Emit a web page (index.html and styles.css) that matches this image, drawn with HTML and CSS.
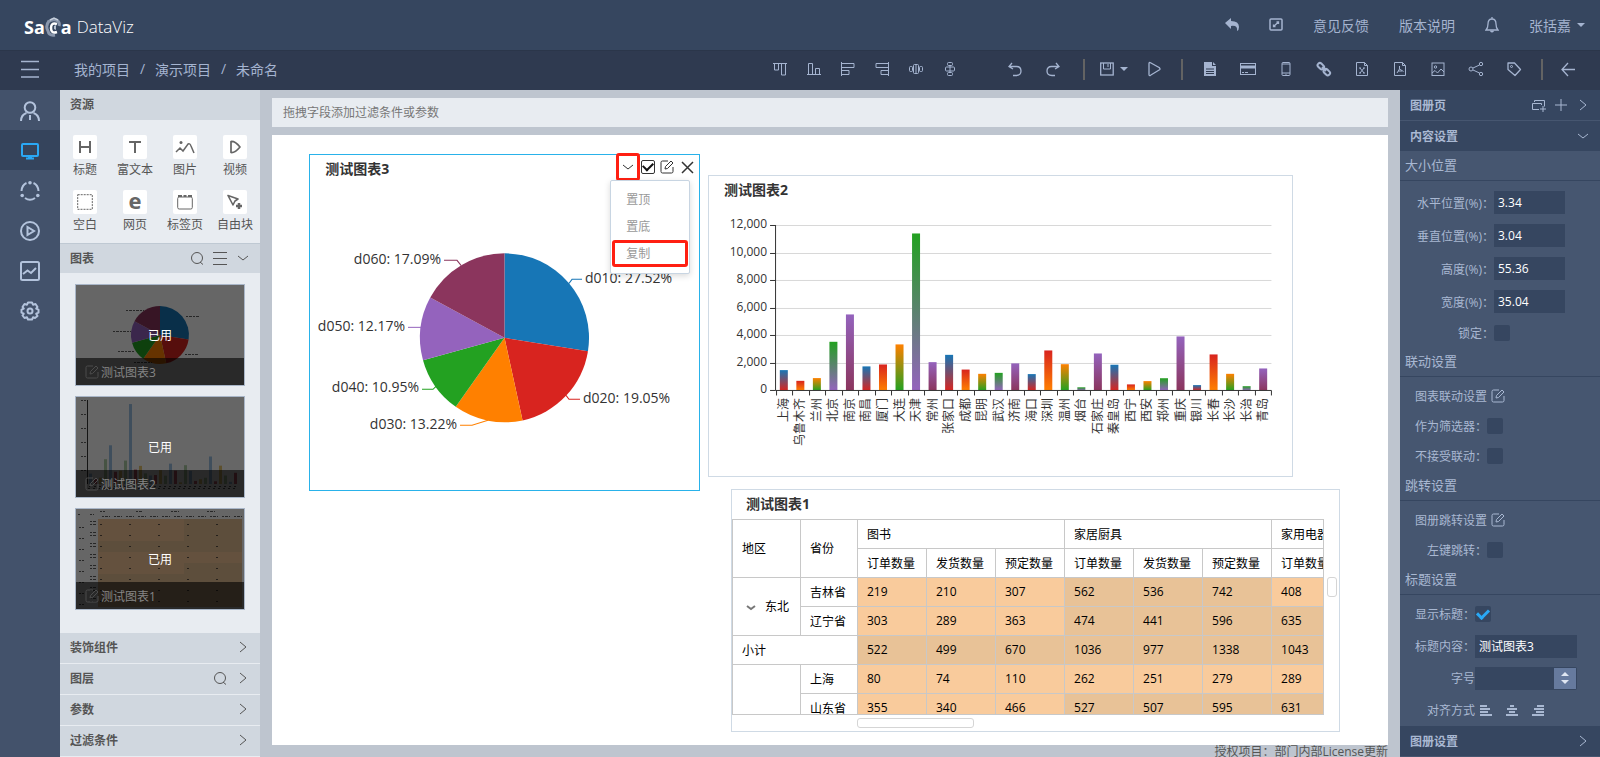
FILE: index.html
```html
<!DOCTYPE html>
<html lang="zh-CN">
<head>
    <meta charset="UTF-8">
    <meta name="viewport" content="width=device-width, initial-scale=1.0">
    <title>SaCa DataViz</title>
    <link rel="stylesheet" href="styles.css">
</head>
<body>

    <!-- shared icons -->
    <svg class="sprite" aria-hidden="true">
        <symbol id="i-right" viewBox="0 0 16 16"><path d="M5 3l6 5-6 5"/></symbol>
        <symbol id="i-down" viewBox="0 0 16 16"><path d="M3 6l5 4 5-4"/></symbol>
        <symbol id="i-search" viewBox="0 0 16 16"><circle cx="8" cy="8" r="5.5"/><path d="M11 12l3 2.500"/></symbol>
        <symbol id="i-edit" viewBox="0 0 16 16"><path d="M9 2H3.500Q2 2 2 3.500v9Q2 14 3.500 14h9q1.500 0 1.500-1.500V8"/><path d="M6 10l.5-2.500L12 2l2 2-5.500 5.500z"/></symbol>
    </svg>

    <header class="header">
        <a class="logo" href="#" aria-label="SaCa DataViz">
            <b>Sa</b>
            <svg width="16" height="20" viewBox="0 0 16 20"><path d="M3 5Q8 1 13 4q2 2 1 5M4 4Q0 9 3 14q1 5 7 4" fill="none" stroke="#8996ac" stroke-width="3"/><path d="M5 3l4-2 4 2" fill="none" stroke="#c5cedb" stroke-width="1.500"/><path d="M12 7Q6 5 6 11t6 4" fill="none" stroke="#fff" stroke-width="2.500"/><path d="M9 9l2-1v5l-2-1z" fill="#b4bfce"/></svg>
            <b>a</b>
            <span>DataViz</span>
        </a>
        <nav class="header-nav">
            <a href="#" aria-label="返回"><svg class="icon" width="14" height="16" viewBox="0 0 14 16"><path d="M0 6l6-5v3q8 0 8 6 0 3-2 4 1-6-6-5v3z" fill="currentColor" stroke="none"/></svg></a>
            <a href="#" aria-label="全屏"><svg class="icon" width="14" height="16" viewBox="0 0 14 16"><rect x="1" y="2" width="12" height="11" rx="1" stroke-width="1.500"/><path d="M4.500 9.500l5-4.500M7.500 5h2v2M4.500 7.500v2h2" stroke-width="1.300"/></svg></a>
            <a href="#">意见反馈</a>
            <a href="#">版本说明</a>
            <a href="#" aria-label="消息"><svg class="icon" width="14" height="16" viewBox="0 0 14 16"><path d="M1 13h12q-2-2-2-6 0-5-4-5T3 7q0 4-2 6zM7 2V0M5.500 14q1.500 1.500 3 0" stroke-width="1.300"/></svg></a>
            <a class="user" href="#">张括嘉<i class="caret"></i></a>
        </nav>
    </header>

    <div class="toolbar">
        <button class="menu-btn" aria-label="菜单"><svg class="icon" width="18" height="18" viewBox="0 0 18 18"><path d="M0 1.500h18M0 9.500h18M0 17h18" stroke-width="1.500"/></svg></button>
        <nav class="crumbs"><a href="#">我的项目</a><i>/</i><a href="#">演示项目</a><i>/</i><a href="#">未命名</a></nav>
        <div class="tools tools-align">
            <button aria-label="顶端对齐"><svg class="icon"><path d="M1 2.500h14M2.500 3v6h4V3M9.500 3v11h4V3"/></svg></button>
            <button aria-label="底端对齐"><svg class="icon"><path d="M1 13.500h14M2.500 13V2.500h4V13M9.500 13V7.500h4V13"/></svg></button>
            <button aria-label="左对齐"><svg class="icon"><path d="M1.500 1v14M2 2.500h12v4H2M2 9.500h7v4H2"/></svg></button>
            <button aria-label="右对齐"><svg class="icon"><path d="M14.500 1v14M14 2.500H2v4h12M14 9.500H7v4h7"/></svg></button>
            <button aria-label="水平分布"><svg class="icon"><rect x="5.500" y="3.500" width="5" height="9" rx="1"/><rect x="1.500" y="5.500" width="3" height="5" rx="1"/><rect x="11.500" y="5.500" width="3" height="5" rx="1"/><path d="M8 3v10"/></svg></button>
            <button aria-label="垂直分布"><svg class="icon"><rect x="3.500" y="6" width="9" height="4" rx="1"/><rect x="5.500" y="1.500" width="5" height="3" rx="1"/><rect x="5.500" y="11.500" width="5" height="3" rx="1"/><path d="M8 4v8"/></svg></button>
        </div>
        <div class="tools tools-history">
            <button aria-label="撤销"><svg class="icon"><path d="M5 2L2 5.500 6 8M2 5.500h7.500q4.500 0 4.500 4.500t-5 4.500H6" stroke-width="1.300"/></svg></button>
            <button aria-label="重做"><svg class="icon"><path d="M11 2l3 3.500L10 8M14 5.500H6.500Q2 5.500 2 10t5 4.500h3" stroke-width="1.300"/></svg></button>
        </div>
        <div class="tools">
            <i class="sep"></i>
            <button class="save" aria-label="保存"><svg class="icon" width="14" height="14" viewBox="0 0 14 14"><rect x=".7" y="1" width="12.500" height="12" stroke-width="1.300"/><path d="M3.500 1v6h7V1M8 2v3"/></svg><i class="caret"></i></button>
            <button aria-label="预览"><svg class="icon"><path d="M3 2.500q0-1.500 1.500-.7l9 5q1 1.200 0 2l-9 5.500Q3 15 3 13.500z" stroke-width="1.300"/></svg></button>
            <i class="sep"></i>
            <button aria-label="文档"><svg class="icon"><path d="M2 1h8v4h4v10H2zM11 1l3 3h-3z" fill="currentColor" stroke="none"/><path d="M4 8h8M4 10.500h8M4 12.500h8" stroke="#2f3a50"/></svg></button>
            <button aria-label="卡片"><svg class="icon"><rect x=".5" y="2.500" width="15" height="11"/><path d="M1 6h14" stroke-width="3"/><path d="M2 11.500h2M5 11.500h3"/></svg></button>
            <button aria-label="手机"><svg class="icon"><rect x="4" y="1.500" width="8" height="13" rx="1"/><path d="M4 3h8M4 12h8M7.500 13.300h1"/></svg></button>
            <button aria-label="链接"><svg class="icon"><g stroke-width="2"><rect x="1.500" y="3" width="7" height="4.500" rx="2" transform="rotate(45 5 5)"/><rect x="7.500" y="9" width="7" height="4.500" rx="2" transform="rotate(45 11 11)"/><path d="M6 6l4 4"/></g></svg></button>
            <button aria-label="导出Excel"><svg class="icon"><path d="M2.500 1.500h8l3 3v10h-11zM10.500 1.500v3h3M6 7l4 5M10 7l-4 5M5 7h2M9 7h2M5 12h2M9 12h2"/></svg></button>
            <button aria-label="导出PDF"><svg class="icon"><path d="M2.500 1.500h8l3 3v10h-11zM10.500 1.500v3h3M7.500 5v3L5 12M7.500 8l4 2.500M6 10h4"/></svg></button>
            <button aria-label="导出图片"><svg class="icon"><rect x="2" y="2" width="12" height="12.500"/><circle cx="5.500" cy="6" r="1.200"/><path d="M2 12l3-2.500L7.500 12 11 8l3 3"/></svg></button>
            <button aria-label="分享"><svg class="icon"><circle cx="3" cy="8" r="2"/><circle cx="13" cy="3" r="1.700"/><circle cx="13" cy="13" r="1.700"/><path d="M5 7l6.500-3M5 9l6.500 3"/></svg></button>
            <button aria-label="标签"><svg class="icon"><path d="M2 2h6.500l6 6.500-5.500 6L2 8.500z" stroke-linejoin="round" stroke-width="1.300"/><circle cx="5.500" cy="5.500" r="1"/></svg></button>
            <i class="sep"></i>
            <button class="back" aria-label="退出"><svg class="icon"><path d="M8 2L2 8.500 8 15M2 8.500h13" stroke-width="1.300"/></svg></button>
        </div>
    </div>

    <main class="main">
        <nav class="rail">
            <a href="#" aria-label="用户"><svg class="icon" width="20" height="20" viewBox="0 0 20 20"><circle cx="10" cy="6.500" r="5.300"/><path d="M1 20q0-6 5.500-8M19 20q0-6-5.500-8M10 14v5"/></svg></a>
            <a class="active" href="#" aria-label="图册"><svg class="icon" width="20" height="20" viewBox="0 0 20 20"><rect x="2" y="3" width="16" height="12" rx="1"/><path d="M6 17.500h8M8 16.500h4"/></svg></a>
            <a href="#" aria-label="数据"><svg class="icon" width="20" height="20" viewBox="0 0 20 20"><path d="M6.500 2Q2 4 1.500 10M13.500 2q4.500 2 5 8M5 17q5 3.500 10 0"/><g fill="currentColor" stroke="none"><circle cx="10" cy="1.800" r="1.800"/><circle cx="2.200" cy="14.500" r="1.800"/><circle cx="17.800" cy="14.500" r="1.800"/></g></svg></a>
            <a href="#" aria-label="播放"><svg class="icon" width="20" height="20" viewBox="0 0 20 20"><circle cx="10" cy="10" r="9"/><path d="M7.500 6v8l6.500-4z"/></svg></a>
            <a href="#" aria-label="分析"><svg class="icon" width="20" height="20" viewBox="0 0 20 20"><rect x="1" y="1" width="18" height="18" rx="1.500"/><path d="M3 13l4.500-3.500L11 12l5-5"/></svg></a>
            <a href="#" aria-label="设置"><svg class="icon" width="20" height="20" viewBox="0 0 20 20"><path d="M8 1.500h4l1 2.200 2.500-.7 2 3-1.300 1.700 2.300 1v3l-2.300 1L17.500 15l-2.500 2-2-.7-1 2.200H8l-1-2.200-2.500.7-2-2.500 1.300-1.800-2.300-1v-3l2.300-1L2.500 6l2-3 2.500.7z" stroke-linejoin="round"/><circle cx="10" cy="10" r="2.500"/></svg></a>
        </nav>

        <aside class="sidebar">
            <div class="side-head">资源</div>
            <div class="resources">
                <button><span><svg class="icon" viewBox="0 0 16 16"><path d="M3 2v12M13 2v12M3 8h10" stroke-width="2"/></svg></span>标题</button>
                <button><span><svg class="icon" viewBox="0 0 16 16"><path d="M2 3h12M8 3v11" stroke-width="2"/></svg></span>富文本</button>
                <button><span><svg class="icon icon-wide" viewBox="0 0 20 16"><path d="M1 13l4-4 3 3 5-7q2-1 3 2l3 7" stroke-width="1.500"/><circle cx="6" cy="3.500" r="1.500" fill="currentColor" stroke="none"/></svg></span>图片</button>
                <button><span><svg class="icon" viewBox="0 0 16 16"><path d="M4 2.500q4-.5 9 5.500-5 6-9 5.500z" stroke-width="1.700" stroke-linejoin="round"/></svg></span>视频</button>
                <button><span><svg class="icon" viewBox="0 0 16 16"><rect x=".7" y=".7" width="14.600" height="14.600" stroke-dasharray="2 1"/></svg></span>空白</button>
                <button><span><b>e</b></span>网页</button>
                <button><span><svg class="icon" viewBox="0 0 16 16"><rect x=".7" y="3" width="14.600" height="12" rx="1.500"/><path d="M1 2h4M6.500 2h3M11 2h4" stroke-width="2"/></svg></span>标签页</button>
                <button><span><svg class="icon" viewBox="0 0 16 16"><path d="M1 1.500l10 3.500-3 2-2 4z" stroke-width="1.600" stroke-linejoin="round"/><path d="M12 9v6M9 12h6" stroke-width="2.500"/></svg></span>自由块</button>
            </div>
            <div class="side-head side-head-line">图表
                <button aria-label="搜索"><svg class="icon"><use href="#i-search"/></svg></button>
                <button aria-label="列表"><svg class="icon"><path d="M1 2.500h14M1 8.500h14M1 14.500h14"/></svg></button>
                <button class="last" aria-label="收起"><svg class="icon"><use href="#i-down"/></svg></button>
            </div>
            <div class="thumbs">
                <div class="thumb">
                    <svg id="thumb-pie" viewBox="0 0 168 100"></svg>
                    <div class="thumb-mask">已用</div>
                    <div class="thumb-name"><svg class="icon"><use href="#i-edit"/></svg>测试图表3</div>
                </div>
                <div class="thumb">
                    <svg id="thumb-bar" viewBox="0 0 168 100"></svg>
                    <div class="thumb-mask">已用</div>
                    <div class="thumb-name"><svg class="icon"><use href="#i-edit"/></svg>测试图表2</div>
                </div>
                <div class="thumb">
                    <svg id="thumb-table" viewBox="0 0 168 100"></svg>
                    <div class="thumb-mask">已用</div>
                    <div class="thumb-name"><svg class="icon"><use href="#i-edit"/></svg>测试图表1</div>
                </div>
            </div>
            <div class="side-row">装饰组件<button class="last" aria-label="展开"><svg class="icon"><use href="#i-right"/></svg></button></div>
            <div class="side-row">图层<button aria-label="搜索"><svg class="icon"><use href="#i-search"/></svg></button><button class="last" aria-label="展开"><svg class="icon"><use href="#i-right"/></svg></button></div>
            <div class="side-row">参数<button class="last" aria-label="展开"><svg class="icon"><use href="#i-right"/></svg></button></div>
            <div class="side-row">过滤条件<button class="last" aria-label="展开"><svg class="icon"><use href="#i-right"/></svg></button></div>
        </aside>

        <section class="workspace">
            <div class="filter-bar">拖拽字段添加过滤条件或参数</div>
            <div class="canvas">
                <div class="widget widget-pie">
                    <div class="widget-head">
                        <h2>测试图表3</h2>
                        <div class="widget-tools">
                            <button class="more marked" aria-label="更多"><svg class="icon"><use href="#i-down"/></svg></button>
                            <input class="check check-dark" type="checkbox" aria-label="选中" checked>
                            <button aria-label="编辑"><svg class="icon"><use href="#i-edit"/></svg></button>
                            <button aria-label="关闭"><svg class="icon"><path d="M3 3l11 11M14 3L3 14" stroke-width="1.500"/></svg></button>
                        </div>
                    </div>
                    <svg class="plot" id="pie" viewBox="0 0 389 305"></svg>
                    <div class="menu">
                        <button>置顶</button>
                        <button>置底</button>
                        <button class="marked">复制</button>
                    </div>
                </div>

                <div class="widget widget-bar">
                    <div class="widget-head"><h2>测试图表2</h2></div>
                    <svg class="plot" id="bar" viewBox="0 0 583 270"></svg>
                </div>

                <div class="widget widget-table">
                    <div class="widget-head"><h2>测试图表1</h2></div>
                    <div class="table-area">
                        <div class="table-view">
                            <table>
                                <colgroup><col class="c-area"><col class="c-prov"><col span="7" class="c-num"></colgroup>
                                <thead>
                                    <tr><th rowspan="2">地区</th><th rowspan="2">省份</th><th colspan="3">图书</th><th colspan="3">家居厨具</th><th>家用电器</th></tr>
                                    <tr><th>订单数量</th><th>发货数量</th><th>预定数量</th><th>订单数量</th><th>发货数量</th><th>预定数量</th><th>订单数量</th></tr>
                                </thead>
                                <tbody>
                                    <tr><th rowspan="2" class="group"><svg class="icon"><path d="M1 4l4 3 4-3" stroke-width="2"/></svg>东北</th><th>吉林省</th><td>219</td><td>210</td><td>307</td><td class="d">562</td><td class="d">536</td><td class="d">742</td><td>408</td></tr>
                                    <tr><th>辽宁省</th><td>303</td><td>289</td><td>363</td><td class="d">474</td><td class="d">441</td><td class="d">596</td><td class="d">635</td></tr>
                                    <tr class="total"><th colspan="2">小计</th><td>522</td><td>499</td><td>670</td><td>1036</td><td>977</td><td>1338</td><td>1043</td></tr>
                                    <tr><th rowspan="2"></th><th>上海</th><td>80</td><td>74</td><td>110</td><td>262</td><td>251</td><td>279</td><td>289</td></tr>
                                    <tr><th>山东省</th><td>355</td><td>340</td><td>466</td><td class="d">527</td><td class="d">507</td><td class="d">595</td><td class="d">631</td></tr>
                                </tbody>
                            </table>
                        </div>
                        <div class="bar-v"></div>
                        <div class="bar-h"></div>
                    </div>
                </div>
            </div>
            <footer class="license">授权项目：部门内部License更新</footer>
        </section>

        <aside class="settings">
            <div class="set-head">图册页
                <button aria-label="复制页"><svg class="icon"><path d="M3.500 5V3.500h10v6M8 12.500H1.500v-6h9V8M12 9v6M9 12h6"/></svg></button>
                <button aria-label="新增页"><svg class="icon"><path d="M8 2v12M2 8h12"/></svg></button>
                <button class="last" aria-label="展开"><svg class="icon"><use href="#i-right"/></svg></button>
            </div>
            <div class="set-head set-open">内容设置<button class="last" aria-label="收起"><svg class="icon"><use href="#i-down"/></svg></button></div>
            <form class="set-body">
                <h3>大小位置</h3>
                <div class="group-size">
                    <div class="field"><label for="x">水平位置(%)：</label><input id="x" type="text" value="3.34"></div>
                    <div class="field"><label for="y">垂直位置(%)：</label><input id="y" type="text" value="3.04"></div>
                    <div class="field"><label for="h">高度(%)：</label><input id="h" type="text" value="55.36"></div>
                    <div class="field"><label for="w">宽度(%)：</label><input id="w" type="text" value="35.04"></div>
                    <div class="field field-short"><label for="lock">锁定：</label><input class="check" id="lock" type="checkbox"></div>
                </div>
                <h3>联动设置</h3>
                <div class="group-link">
                    <div class="field"><label for="link">图表联动设置</label><button id="link" type="button" aria-label="编辑"><svg class="icon"><use href="#i-edit"/></svg></button></div>
                    <div class="field"><label for="as-filter">作为筛选器：</label><input class="check" id="as-filter" type="checkbox"></div>
                    <div class="field"><label for="no-link">不接受联动：</label><input class="check" id="no-link" type="checkbox"></div>
                </div>
                <h3>跳转设置</h3>
                <div class="group-link">
                    <div class="field"><label for="jump">图册跳转设置</label><button id="jump" type="button" aria-label="编辑"><svg class="icon"><use href="#i-edit"/></svg></button></div>
                    <div class="field"><label for="left-jump">左键跳转：</label><input class="check" id="left-jump" type="checkbox"></div>
                </div>
                <h3>标题设置</h3>
                <div class="group-title">
                    <div class="field"><label for="show">显示标题：</label><input class="check" id="show" type="checkbox" checked></div>
                    <div class="field"><label for="name">标题内容：</label><input id="name" type="text" value="测试图表3"></div>
                    <div class="field"><label for="size">字号</label><div class="spinner"><input id="size" type="text"><button type="button" aria-label="调整字号"><i class="caret up"></i><i class="caret"></i></button></div></div>
                    <div class="field aligns"><span>对齐方式</span>
                        <button type="button" aria-label="居左"><svg class="icon" viewBox="0 0 12 12"><path d="M0 2h7M0 5h10M0 8h8M0 11h12" stroke-width="2"/></svg></button>
                        <button type="button" aria-label="居中"><svg class="icon" viewBox="0 0 12 12"><path d="M4 2h4M1 5h10M3 8h6M0 11h12" stroke-width="2"/></svg></button>
                        <button type="button" aria-label="居右"><svg class="icon" viewBox="0 0 12 12"><path d="M5 2h7M2 5h10M4 8h8M0 11h12" stroke-width="2"/></svg></button>
                    </div>
                </div>
            </form>
            <div class="set-head">图册设置<button class="last" aria-label="展开"><svg class="icon"><use href="#i-right"/></svg></button></div>
        </aside>
    </main>

    <script>
        const colors = ['#1776b6', '#d8241f', '#ff8000', '#23a121', '#9463bd', '#8b355d'];

        // label: x, y, anchor; line: guide points
        const pieData = [
            { name: 'd010', value: 27.52, x: 275, y: 98, line: '259,98 262,94 272,94' },
            { name: 'd020', value: 19.05, x: 273, y: 218, line: '256,210 259,214 270,214' },
            { name: 'd030', value: 13.22, x: 147, y: 244, end: true, line: '178,235 162,240 150,240' },
            { name: 'd040', value: 10.95, x: 109, y: 207, end: true, line: '126,201 123,204 112,204' },
            { name: 'd050', value: 12.17, x: 95, y: 146, end: true, line: '111,142 98,142' },
            { name: 'd060', value: 17.09, x: 131, y: 79, end: true, line: '151,80 147,75 134,75' }
        ];

        const barData = [
            ['上海', 1480], ['乌鲁木齐', 700], ['兰州', 900], ['北京', 3540], ['南京', 5530], ['南昌', 1750],
            ['厦门', 1890], ['大连', 3350], ['天津', 11420], ['常州', 2060], ['张家口', 2590], ['成都', 1520],
            ['昆明', 1210], ['武汉', 1280], ['济南', 1970], ['海口', 1190], ['深圳', 2910], ['温州', 1910],
            ['烟台', 230], ['石家庄', 2690], ['秦皇岛', 1870], ['西宁', 440], ['西安', 680], ['郑州', 890],
            ['重庆', 3930], ['银川', 390], ['长春', 2620], ['长沙', 1210], ['长治', 310], ['青岛', 1600]
        ];

        function slices(cx, cy, r) {
            let angle = 0;
            return pieData.map((d, i) => {
                const next = angle + d.value / 100 * Math.PI * 2;
                const x1 = cx + r * Math.sin(angle), y1 = cy - r * Math.cos(angle);
                const x2 = cx + r * Math.sin(next), y2 = cy - r * Math.cos(next);
                angle = next;
                return `<path d="M${cx} ${cy}L${x1} ${y1}A${r} ${r} 0 0 1 ${x2} ${y2}Z" fill="${colors[i]}"/>`;
            }).join('');
        }

        function drawPie() {
            const labels = pieData.map((d, i) =>
                `<polyline points="${d.line}" fill="none" stroke="${colors[i]}"/>` +
                `<text x="${d.x}" y="${d.y}" class="pie-label${d.end ? ' end' : ''}">${d.name}: ${d.value.toFixed(2)}%</text>`
            ).join('');
            document.getElementById('pie').innerHTML = slices(194.5, 152.5, 84.5) + labels;
        }

        function drawBar() {
            const left = 66.5, right = 562.5, bottom = 184.5, height = 165;
            const step = (right - left) / barData.length;
            let html = '<defs>';
            for (let i = 0; i < 5; i++) {
                html += `<linearGradient id="g${i}" x1="0" y1="0" x2="0" y2="1"><stop offset="0" stop-color="${colors[i]}"/><stop offset="1" stop-color="${colors[i + 1]}"/></linearGradient>`;
            }
            html += '</defs>';
            for (let v = 0; v <= 12000; v += 2000) {
                const y = Math.floor(bottom - v / 12000 * height) + 0.5;
                if (v) html += `<path d="M${left} ${y}H${right}" stroke="#d8d8d8"/>`;
                html += `<path d="M61 ${y}H${left}" stroke="#333"/><text x="58" y="${y + 3}" class="axis-label end">${v.toLocaleString('en-US')}</text>`;
            }
            barData.forEach((d, i) => {
                const x = left + step * i, mid = x + step / 2, h = d[1] / 12000 * height;
                html += `<rect x="${mid - 4}" y="${bottom - h}" width="8" height="${h}" fill="url(#g${i % 5})"/>`;
                html += `<path d="M${Math.round(x) + 0.5} ${bottom}v5" stroke="#333"/>`;
                html += `<text transform="translate(${mid + 4} 192) rotate(-90)" class="axis-label end">${d[0]}</text>`;
            });
            html += `<path d="M${left} 19V${bottom}H${right}v5" fill="none" stroke="#333"/>`;
            document.getElementById('bar').innerHTML = html;
        }

        function drawThumbs() {
            const dash = (x, y, w) => `<path d="M${x} ${y + 0.5}h${w}" stroke="#222" stroke-dasharray="2 1 3 1" opacity=".7"/>`;
            document.getElementById('thumb-pie').innerHTML = slices(84, 50, 29) +
                dash(50, 25, 18) + dash(37, 46, 18) + dash(42, 66, 16) + dash(58, 77, 18) + dash(110, 31, 14) + dash(109, 69, 14);

            const soft = ['#9ec3e6', '#d06070', '#e8c870', '#b0d0a8'];
            let bars = '<path d="M11.500 3v84" stroke="#333"/>';
            barData.forEach((d, i) => {
                const h = d[1] / 12000 * 84;
                bars += `<rect x="${13 + i * 5}" y="${87 - h}" width="3" height="${h}" fill="${soft[i % 4]}"/>` + dash(13 + i * 5, 89, 3) + dash(12 + i * 5, 91, 2);
            });
            for (let y = 3; y < 87; y += 14) bars += dash(5, y, 5);
            document.getElementById('thumb-bar').innerHTML = bars;

            let table = '<rect x="22" y="10" width="144" height="88" fill="#e8c297"/>' +
                '<path d="M22 10h86v22H22zM22 43h144v11H22zM22 54h86v11H22z" fill="#f9cb9c"/>';
            for (let x = 26; x < 160; x += 12) table += dash(x, 7, 8);
            table += dash(24, 2, 5) + dash(60, 2, 7) + dash(95, 2, 8) + dash(131, 2, 8) + dash(2, 5, 3) + dash(14, 5, 4);
            for (let y = 15; y < 96; y += 11) {
                table += dash(14, y, 6) + dash(14, y - 3, 6) + dash(3, y + 3, 5);
                for (let x = 24; x < 150; x += 29) table += dash(x, y, 3);
            }
            document.getElementById('thumb-table').innerHTML = table;
        }

        drawPie();
        drawBar();
        drawThumbs();
    </script>
</body>
</html>
```
FILE: styles.css
```css
* {
    box-sizing: border-box;
}

body {
    margin: 0;
    height: 100vh;
    display: flex;
    flex-direction: column;
    overflow: hidden;
    font-family: "Open Sans", "Noto Sans CJK SC", sans-serif;
    font-size: 12px;
    color: #333;
}

a {
    color: inherit;
    text-decoration: none;
}

button {
    padding: 0;
    border: none;
    background: none;
    color: inherit;
    font: inherit;
    cursor: pointer;
    display: flex;
    align-items: center;
    justify-content: center;
}

input {
    margin: 0;
    border: none;
    font: inherit;
}

i {
    font-style: normal;
}

.sprite {
    display: none;
}

.icon {
    display: block;
    flex: none;
    fill: none;
    stroke: currentColor;
}

.icon:not([width]) {
    width: 16px;
    height: 16px;
}

.caret {
    border: 4px solid transparent;
    border-top-color: currentColor;
    border-bottom: none;
}

.caret.up {
    border-top: none;
    border-bottom: 4px solid currentColor;
}

/* header */
.header {
    height: 50px;
    flex: none;
    display: flex;
    align-items: center;
    justify-content: space-between;
    padding: 0 15px 0 24px;
    background-color: #36465f;
    color: #a5b4d0;
    font-size: 14px;
}

.logo {
    display: flex;
    align-items: center;
    padding-top: 3px;
    color: #fff;
    font-size: 18px;
}

.logo span {
    margin-left: 5px;
    font-size: 17px;
    font-weight: 300;
}

.header-nav {
    display: flex;
    align-items: center;
    gap: 30px;
}

.user {
    display: flex;
    align-items: center;
    gap: 6px;
}

/* toolbar */
.toolbar {
    height: 40px;
    flex: none;
    display: flex;
    align-items: center;
    padding: 0 15px 3px 0;
    border-top: 1px solid #2b364a;
    background-color: #2f3a50;
    color: #a5b4d0;
    font-size: 14px;
}

.menu-btn {
    width: 60px;
    height: 36px;
}

.crumbs {
    display: flex;
    margin-left: 14px;
    margin-right: auto;
}

.crumbs i {
    width: 25px;
    text-align: center;
}

.tools {
    display: flex;
    align-items: center;
}

.tools button {
    width: 38px;
    height: 30px;
}

.tools-align {
    margin-right: 29px;
}

.tools-align button,
.tools .back {
    width: 34px;
}

.tools-history {
    margin-right: 3px;
}

.tools .save {
    width: 42px;
    gap: 6px;
}

.sep {
    width: 2px;
    height: 21px;
    margin: 0 8px;
    background-color: #636363;
}

/* left side */
.main {
    flex: 1;
    min-height: 0;
    display: flex;
}

.rail {
    width: 60px;
    flex: none;
    background-color: #43526b;
    color: #b3c3dc;
}

.rail a {
    height: 40px;
    display: flex;
    align-items: center;
    justify-content: center;
    padding-top: 1px;
}

.rail .icon {
    stroke-width: 2;
}

.rail .active {
    background-color: #35445c;
    color: #2aa8f5;
}

.sidebar {
    width: 200px;
    flex: none;
    display: flex;
    flex-direction: column;
    background-color: #e8ecf1;
    color: #555;
}

.side-head,
.side-row {
    height: 30px;
    flex: none;
    display: flex;
    align-items: center;
    padding: 0 9px 2px 10px;
    gap: 7px;
    background-color: #d0d7df;
    font-weight: bold;
}

.side-head button:first-of-type,
.side-row button:first-of-type {
    margin-left: auto;
}

.side-head-line {
    border-top: 1px solid #bfc9d3;
}

.side-row {
    height: 31px;
    border-bottom: 1px solid #e8ecf1;
}

.resources {
    flex: none;
    display: grid;
    grid-template-columns: repeat(4, 1fr);
    row-gap: 9px;
    padding: 15px 0 7px;
}

.resources button {
    flex-direction: column;
    line-height: 22px;
    white-space: nowrap;
}

.resources span {
    width: 24px;
    height: 24px;
    display: flex;
    align-items: center;
    justify-content: center;
    border-radius: 2px;
    background-color: #fff;
    color: #666;
}

.resources .icon-wide {
    width: 20px;
}

.resources b {
    padding-bottom: 4px;
    font-size: 22px;
    line-height: 20px;
}

.thumbs {
    flex: 1;
    min-height: 0;
    overflow: hidden;
    display: flex;
    flex-direction: column;
    gap: 10px;
    padding: 11px 15px;
}

.thumb {
    position: relative;
    height: 102px;
    flex: none;
    border: 1px solid #a9b6c8;
    background-color: #fff;
}

.thumb > svg {
    display: block;
    width: 100%;
    height: 100%;
}

.thumb-mask {
    position: absolute;
    inset: 0;
    display: flex;
    align-items: center;
    justify-content: center;
    background-color: rgba(0, 0, 0, 0.6);
    color: #fff;
}

.thumb-name {
    position: absolute;
    left: 0;
    right: 0;
    bottom: 0;
    height: 27px;
    display: flex;
    align-items: center;
    padding-left: 8px;
    background-color: rgba(0, 0, 0, 0.6);
    color: #858585;
}

.thumb-name .icon {
    color: #4c4c4c;
    margin-right: 1px;
}

/* canvas */
.workspace {
    flex: 1;
    min-width: 0;
    display: flex;
    flex-direction: column;
    padding: 8px 12px 0;
    background-color: #bec5cf;
}

.filter-bar {
    height: 29px;
    flex: none;
    margin-bottom: 8px;
    padding-left: 11px;
    line-height: 29px;
    background-color: #e8ecf1;
    color: #777;
}

.canvas {
    position: relative;
    flex: 1;
    background-color: #fff;
}

.license {
    height: 12px;
    flex: none;
    line-height: 14px;
    text-align: right;
    white-space: nowrap;
    color: #555;
}

.widget {
    position: absolute;
    display: flex;
    flex-direction: column;
    border: 1px solid #cfdae5;
    background-color: #fff;
}

.widget-pie {
    left: 3.34%;
    top: 3.04%;
    width: 35.04%;
    height: 55.36%;
    border-color: #29b2ea;
}

.widget-bar {
    left: 39.07%;
    top: 6.56%;
    width: 52.42%;
    height: 49.5%;
}

.widget-table {
    left: 41.13%;
    top: 58.03%;
    width: 54.57%;
    height: 39.84%;
}

.widget-head {
    height: 30px;
    flex: none;
    display: flex;
    justify-content: space-between;
    padding: 0 4px 0 15px;
}

.widget-table .widget-head {
    height: 29px;
    padding-left: 14px;
}

.widget-head h2 {
    margin: 0;
    font-size: 14px;
    line-height: 28px;
}

.widget-tools {
    display: flex;
    align-items: center;
    height: 24px;
    gap: 4px;
}

.widget-tools .more {
    width: 24px;
    height: 28px;
    margin-right: -3px;
}

.marked {
    outline: 3px solid #ff1f12;
    outline-offset: -3px;
    border-radius: 3px;
}

.plot {
    flex: 1;
    min-height: 0;
    width: 100%;
}

.pie-label {
    font-size: 14px;
    fill: #333;
}

.axis-label {
    font-size: 12px;
    fill: #333;
}

.end {
    text-anchor: end;
}

.menu {
    position: absolute;
    top: 25px;
    right: 9px;
    width: 80px;
    padding: 5px 1px 6px;
    border: 1px solid #c8d5e2;
    border-radius: 2px;
    background-color: #fff;
    box-shadow: 0 2px 6px rgba(0, 0, 0, 0.15);
}

.menu button {
    width: 100%;
    height: 27px;
    justify-content: flex-start;
    padding-left: 14px;
    color: #999;
}

/* table */
.table-area {
    flex: 1;
    min-height: 0;
    display: grid;
    grid-template-columns: minmax(0, 1fr) 10px;
    grid-template-rows: minmax(0, 1fr) 10px;
    gap: 3px;
    padding: 0 2px 3px 0;
}

.table-view {
    overflow: hidden;
    border-right: 1px solid #c8c8c8;
    border-bottom: 1px solid #c8c8c8;
}

table {
    width: 608px;
    table-layout: fixed;
    border-collapse: collapse;
    color: #000;
}

.c-area {
    width: 68px;
}

.c-prov {
    width: 57px;
}

.c-num {
    width: 69px;
}

th,
td {
    height: 29px;
    padding: 0 0 0 9px;
    border: 1px solid #c8c8c8;
    font-weight: normal;
    text-align: left;
    white-space: nowrap;
}

td {
    background-color: #f9cb9c;
}

td.d,
.total td {
    background-color: #e8c297;
}

.group .icon {
    display: inline-block;
    width: 10px;
    height: 12px;
    margin: 0 9px 0 4px;
    vertical-align: middle;
    color: #777;
}

.bar-v,
.bar-h {
    border: 1px solid #d5d5d5;
    border-radius: 3px;
}

.bar-v {
    height: 20px;
    margin-top: 58px;
}

.bar-h {
    width: 117px;
    margin-left: 125px;
}

/* right settings */
.settings {
    width: 200px;
    flex: none;
    display: flex;
    flex-direction: column;
    background-color: #465670;
    color: #a9b8d2;
}

.set-head {
    height: 31px;
    flex: none;
    display: flex;
    align-items: center;
    gap: 6px;
    padding: 0 9px 0 10px;
    border-bottom: 1px solid #465670;
    background-color: #364660;
    font-weight: bold;
}

.set-open {
    height: 30px;
    border-bottom: none;
}

.set-head button:first-of-type {
    margin-left: auto;
}

.set-body {
    flex: 1;
    min-height: 0;
    overflow: hidden;
}

.set-body h3 {
    height: 30px;
    margin: 0;
    padding-left: 5px;
    border-bottom: 1px solid #364660;
    font-size: 13px;
    font-weight: normal;
    line-height: 29px;
}

.field {
    height: 33px;
    display: flex;
    align-items: center;
}

.field label,
.field span {
    width: 94px;
    flex: none;
    text-align: right;
    white-space: nowrap;
}

.field input[type="text"] {
    width: 71px;
    height: 23px;
    padding: 0 4px;
    background-color: #364660;
    color: #fff;
}

.group-size {
    padding-top: 5px;
}

.field-short {
    height: 29px;
}

.group-link {
    padding-top: 4px;
}

.group-link .field {
    height: 30px;
}

.group-link label {
    width: 87px;
}

.group-link button {
    margin-left: 3px;
}

.group-title {
    padding-top: 3px;
}

.group-title .field {
    height: 32px;
}

.group-title label,
.group-title span {
    width: 75px;
}

.group-title .field input[type="text"] {
    width: 102px;
}

.spinner {
    display: flex;
    width: 102px;
    border-radius: 2px;
    background-color: #364660;
}

.group-title .spinner input[type="text"] {
    width: 79px;
}

.spinner button {
    width: 22px;
    margin: 1px 0;
    flex-direction: column;
    gap: 4px;
    background-color: #667a9e;
    color: #dfe6f2;
}

.aligns button {
    width: 26px;
    padding-right: 4px;
}

.aligns .icon {
    width: 12px;
    height: 12px;
}

.check {
    appearance: none;
    width: 16px;
    height: 16px;
    flex: none;
    display: flex;
    align-items: center;
    justify-content: center;
    border-radius: 2px;
    background-color: #364660;
    color: #2aa8f5;
}

.check:checked::after {
    content: "";
    width: 9px;
    height: 5px;
    border: solid currentColor;
    border-width: 0 0 3px 3px;
    transform: translateY(-1px) rotate(-45deg);
}

.check-dark {
    width: 14px;
    height: 14px;
    border: 1px solid #333;
    background-color: #fff;
    color: #111;
}

.check-dark:checked::after {
    width: 8px;
    border-width: 0 0 2px 2px;
}
```
